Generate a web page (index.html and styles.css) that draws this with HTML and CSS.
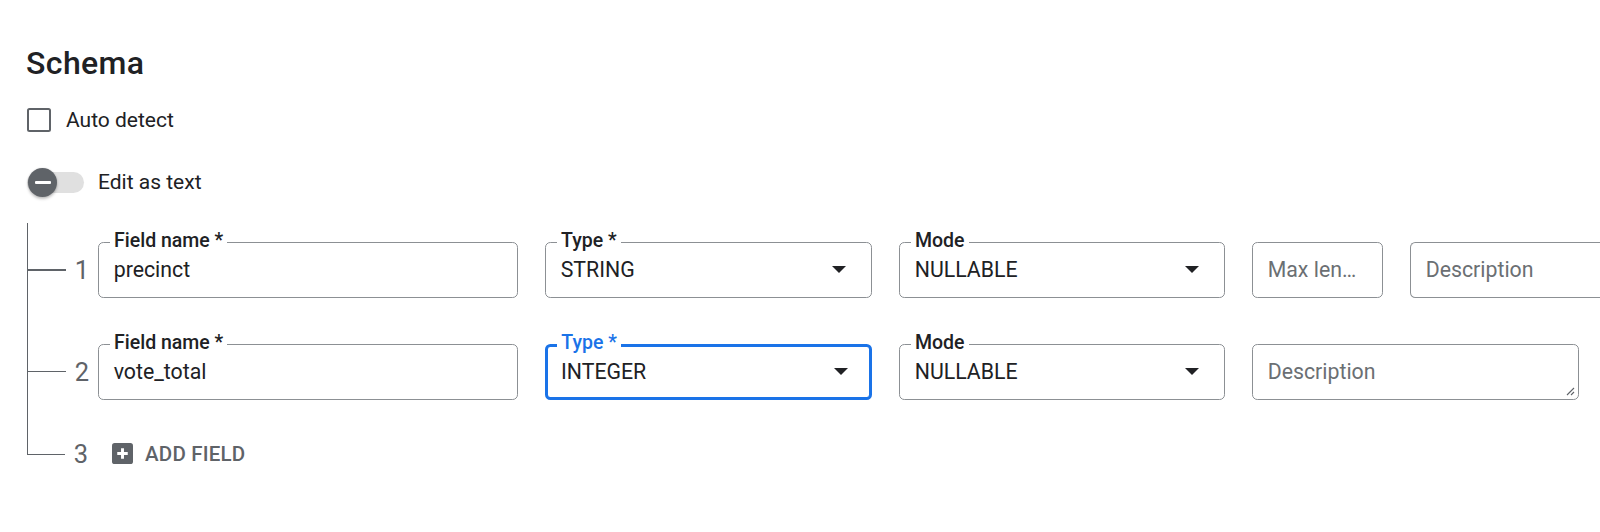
FILE: index.html
```html
<!DOCTYPE html>
<html>
<head>
<meta charset="utf-8">
<link rel="stylesheet" href="styles.css">
</head>
<body>
<div class="page">
  <h1 class="title">Schema</h1>

  <div class="check-row">
    <span class="checkbox"></span>
    <span class="row-label">Auto detect</span>
  </div>

  <div class="toggle-row">
    <span class="toggle">
      <span class="track"></span>
      <span class="thumb"><span class="minus"></span></span>
    </span>
    <span class="row-label">Edit as text</span>
  </div>

  <div class="tree">
    <div class="tree-lines">
      <div class="row">
        <span class="connector"></span>
        <span class="num">1</span>
        <div class="fields">
          <div class="field w-name"><span class="flabel">Field name *</span><span class="value">precinct</span></div>
          <div class="field w-type"><span class="flabel">Type *</span><span class="value">STRING</span><svg class="arrow" viewBox="0 0 14 7"><path d="M0 0H14L7 7Z"/></svg></div>
          <div class="field w-mode"><span class="flabel">Mode</span><span class="value">NULLABLE</span><svg class="arrow" viewBox="0 0 14 7"><path d="M0 0H14L7 7Z"/></svg></div>
          <div class="field w-max"><span class="placeholder">Max len…</span></div>
          <div class="field w-desc cut"><span class="placeholder">Description</span></div>
        </div>
      </div>
      <div class="row">
        <span class="connector"></span>
        <span class="num">2</span>
        <div class="fields">
          <div class="field w-name"><span class="flabel">Field name *</span><span class="value">vote_total</span></div>
          <div class="field w-type focused"><span class="flabel">Type *</span><span class="value">INTEGER</span><svg class="arrow" viewBox="0 0 14 7"><path d="M0 0H14L7 7Z"/></svg></div>
          <div class="field w-mode"><span class="flabel">Mode</span><span class="value">NULLABLE</span><svg class="arrow" viewBox="0 0 14 7"><path d="M0 0H14L7 7Z"/></svg></div>
          <div class="field w-desc"><span class="placeholder">Description</span><svg class="resize" viewBox="0 0 10 10"><path d="M9 2L2 9M9 6L6 9"/></svg></div>
        </div>
      </div>
    </div>
    <div class="row last-row">
      <span class="connector last"></span>
      <span class="num">3</span>
      <span class="add-btn">
        <svg class="add-icon" viewBox="0 0 20 20"><rect x="0" y="0" width="20" height="20" rx="2.5"/><path d="M10 5V15M5 10H15"/></svg>
        <span class="add-text">ADD FIELD</span>
      </span>
    </div>
  </div>
</div>
</body>
</html>
```

FILE: styles.css
```css
* { box-sizing: border-box; }
html, body { margin: 0; padding: 0; background: #fff; }
body {
  width: 1600px;
  height: 532px;
  overflow: hidden;
  font-family: Roboto, "Liberation Sans", Arial, sans-serif;
  color: #202124;
}
.page {
  padding: 43px 0 0 26px;
}
.title {
  margin: 0;
  font-size: 32px;
  line-height: 40px;
  font-weight: 500;
  letter-spacing: 0.4px;
  color: #202124;
}
.check-row, .toggle-row {
  display: flex;
  align-items: center;
  height: 32px;
}
.check-row { margin-top: 21px; padding-left: 1px; }
.toggle-row { margin-top: 30px; padding-left: 1px; }
.row-label {
  font-size: 21px;
  line-height: 24px;
  color: #202124;
}
.checkbox {
  width: 24px;
  height: 24px;
  border: 2.67px solid #5f6368;
  border-radius: 2.5px;
  margin-right: 15px;
}
.toggle {
  position: relative;
  width: 58px;
  height: 28px;
  margin-right: 13px;
  display: flex;
  align-items: center;
}
.track {
  width: 57px;
  height: 21px;
  border-radius: 11px;
  background: #e0e0e0;
}
.thumb {
  position: absolute;
  left: 1px;
  top: 0;
  width: 29px;
  height: 29px;
  border-radius: 50%;
  background: #5f6368;
  box-shadow: 0 2px 3px rgba(0,0,0,.24), 0 0 2px rgba(0,0,0,.12);
  display: flex;
  align-items: center;
  justify-content: center;
}
.minus {
  width: 16px;
  height: 3px;
  background: #fff;
  border-radius: 1px;
}
.tree {
  margin-top: 25px;
  margin-left: 1px;
}
.tree-lines {
  border-left: 1.33px solid #5f6368;
  padding: 18.7px 0 34px 0;
  display: flex;
  flex-direction: column;
  gap: 45.6px;
}
.row {
  display: flex;
  align-items: center;
  height: 56.3px;
}
.connector {
  width: 38px;
  height: 1.33px;
  background: #5f6368;
  flex: none;
}
.num {
  width: 32px;
  flex: none;
  text-align: right;
  padding-right: 9px;
  font-size: 25.5px;
  font-weight: 400;
  line-height: 30px;
  color: #5f6368;
}
.fields {
  display: flex;
  gap: 27px;
  height: 56.3px;
  flex: none;
}
.field {
  position: relative;
  flex: none;
  height: 56.3px;
  border: 1.33px solid #8c9094;
  border-radius: 5.33px;
  display: flex;
  align-items: center;
  padding: 0 14.7px;
}
.field.focused {
  border: 3px solid #1a73e8;
  padding: 0 13px;
}
.w-name { width: 420px; }
.w-type { width: 327px; }
.w-mode { width: 326px; }
.w-max { width: 131px; }
.w-desc { width: 327px; }
.w-desc.cut {
  width: 189.7px;
  border-right: none;
  border-radius: 5.33px 0 0 5.33px;
}
.flabel {
  position: absolute;
  top: -12px;
  left: 11px;
  padding: 0 4px;
  background: #fff;
  font-size: 19.5px;
  line-height: 20px;
  font-weight: 500;
  color: #202124;
  white-space: nowrap;
}
.focused .flabel {
  top: -13.7px;
  left: 9.3px;
  color: #1a73e8;
}
.value {
  flex: 1;
  font-size: 21.3px;
  line-height: 26px;
  color: #202124;
  white-space: nowrap;
}
.placeholder {
  flex: 1;
  font-size: 21.3px;
  line-height: 26px;
  color: #6b6f73;
  white-space: nowrap;
}
.arrow {
  width: 14px;
  height: 7px;
  margin-right: 10px;
  fill: #202124;
  flex: none;
}
.focused .arrow { margin-right: 8.4px; }
.resize {
  position: absolute;
  right: 3px;
  bottom: 3px;
  width: 10px;
  height: 10px;
  stroke: #5f6368;
  stroke-width: 1.1;
  fill: none;
}
.last-row {
  height: 40px;
  align-items: flex-start;
}
.connector.last {
  height: 20.67px;
  background: none;
  border-left: 1.33px solid #5f6368;
  border-bottom: 1.33px solid #5f6368;
}
.last-row .num {
  align-self: center;
}
.add-btn {
  align-self: center;
  display: flex;
  align-items: center;
  margin-left: 15px;
}
.add-icon {
  width: 21px;
  height: 21px;
  margin-right: 12px;
}
.add-icon rect { fill: #5f6368; }
.add-icon path { stroke: #fff; stroke-width: 2.8; fill: none; }
.add-text {
  font-size: 20.5px;
  font-weight: 500;
  line-height: 24px;
  color: #5f6368;
  letter-spacing: 0.2px;
}
```
